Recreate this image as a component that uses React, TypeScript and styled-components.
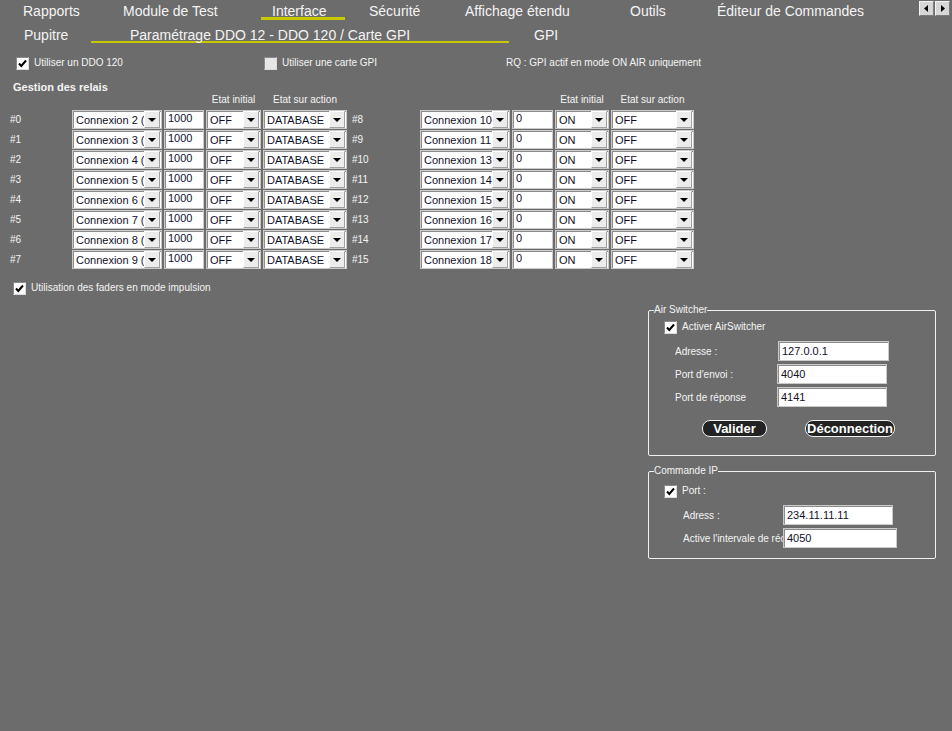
import React from 'react';
import styled, { createGlobalStyle } from 'styled-components';

const GlobalStyle = createGlobalStyle`
  html, body {
    margin: 0;
    padding: 0;
    background: #6c6c6c;
  }
  body {
    font-family: 'Liberation Sans', Arial, sans-serif;
  }
`;

const colors = {
  bg: '#6c6c6c',
  text: '#f4f4f4',
  accent: '#c6c800',
  field: '#ffffff',
  fieldText: '#10102a',
};

type TRelay = { id: number; conn: string; delay: string; init: string; action: string };

const leftRelays: TRelay[] = [2, 3, 4, 5, 6, 7, 8, 9].map((n, i) => ({
  id: i,
  conn: `Connexion ${n} (DDO 12)`,
  delay: '1000',
  init: 'OFF',
  action: 'DATABASE',
}));

const rightRelays: TRelay[] = [10, 11, 13, 14, 15, 16, 17, 18].map((n, i) => ({
  id: i + 8,
  conn: `Connexion ${n} (DDO 120)`,
  delay: '0',
  init: 'ON',
  action: 'OFF',
}));

// slot width / text offset inside the slot
const topTabs = [
  { label: 'Rapports', w: 100, pad: 0 },
  { label: 'Module de Test', w: 138, pad: 0 },
  { label: 'Interface', w: 84, pad: 11, active: true },
  { label: 'Sécurité', w: 120, pad: 24 },
  { label: 'Affichage étendu', w: 165, pad: 0 },
  { label: 'Outils', w: 87, pad: 0 },
  { label: 'Éditeur de Commandes', w: 170, pad: 0 },
];

const Checkbox = ({ checked }: { checked?: boolean }) => (
  <CheckBoxBox $checked={checked}>
    {checked && (
      <svg width="9" height="9" viewBox="0 0 9 9">
        <path d="M1 4.5 L3.3 7 L8 1.5" fill="none" stroke="#000" strokeWidth="2" />
      </svg>
    )}
  </CheckBoxBox>
);

const Select = ({ value }: { value: string }) => (
  <SelectBox>
    <SelectText>{value}</SelectText>
    <DropButton>
      <Triangle />
    </DropButton>
  </SelectBox>
);

const RelayTable = ({ relays, cols }: { relays: TRelay[]; cols: string }) => (
  <TableGrid $cols={cols}>
    <span />
    <span />
    <span />
    <ColHead>Etat initial</ColHead>
    <ColHead>Etat sur action</ColHead>
    {relays.map((r) => (
      <React.Fragment key={r.id}>
        <RowLabel>#{r.id}</RowLabel>
        <Select value={r.conn} />
        <TextInput>{r.delay}</TextInput>
        <Select value={r.init} />
        <Select value={r.action} />
      </React.Fragment>
    ))}
  </TableGrid>
);

const App = () => {
  return (
    <Page>
      <GlobalStyle />
      <TabRow>
        {topTabs.map((t) => (
          <Tab key={t.label} $w={t.w} $pad={t.pad} $active={t.active}>
            {t.label}
          </Tab>
        ))}
        <Arrows>
          <ArrowButton>
            <svg width="5" height="7" viewBox="0 0 5 7">
              <path d="M4 0 L0 3.5 L4 7 Z" fill="#000" />
            </svg>
          </ArrowButton>
          <ArrowButton>
            <svg width="5" height="7" viewBox="0 0 5 7">
              <path d="M1 0 L5 3.5 L1 7 Z" fill="#000" />
            </svg>
          </ArrowButton>
        </Arrows>
      </TabRow>
      <SubTabRow>
        <SubTab $w={67}>Pupitre</SubTab>
        <SubTab $w={418} $pad={39} $active>
          Paramétrage DDO 12 - DDO 120 / Carte GPI
        </SubTab>
        <SubTab $w={80} $pad={25}>
          GPI
        </SubTab>
      </SubTabRow>

      <OptionsRow>
        <CheckLine>
          <Checkbox checked />
          <span>Utiliser un DDO 120</span>
        </CheckLine>
        <CheckLine>
          <Checkbox />
          <span>Utiliser une carte GPI</span>
        </CheckLine>
        <Note>RQ : GPI actif en mode ON AIR uniquement</Note>
      </OptionsRow>

      <SectionTitle>Gestion des relais</SectionTitle>
      <Tables>
        <RelayTable relays={leftRelays} cols="60px 90px 40px 55px 84px" />
        <RelayTable relays={rightRelays} cols="66px 90px 41px 54px 83px" />
      </Tables>

      <FaderLine>
        <Checkbox checked />
        <span>Utilisation des faders en mode impulsion</span>
      </FaderLine>

      <SidePanel>
        <GroupBox>
          <legend>Air Switcher</legend>
          <CheckLine $indent={15}>
            <Checkbox checked />
            <span>Activer AirSwitcher</span>
          </CheckLine>
          <FieldList $top={7}>
            <FieldRow $labelW={103}>
              <FieldLabel>Adresse :</FieldLabel>
              <TextInput $w={111} $h={20}>127.0.0.1</TextInput>
            </FieldRow>
            <FieldRow $labelW={102}>
              <FieldLabel>Port d'envoi :</FieldLabel>
              <TextInput $w={110} $h={20}>4040</TextInput>
            </FieldRow>
            <FieldRow $labelW={102}>
              <FieldLabel>Port de réponse</FieldLabel>
              <TextInput $w={110} $h={20}>4141</TextInput>
            </FieldRow>
          </FieldList>
          <ButtonRow>
            <PillButton $w={65}>Valider</PillButton>
            <PillButton $w={90}>Déconnection</PillButton>
          </ButtonRow>
        </GroupBox>

        <GroupBox $top={7} $bottom={10}>
          <legend>Commande IP</legend>
          <CheckLine $indent={15}>
            <Checkbox checked />
            <span>Port :</span>
          </CheckLine>
          <FieldList $top={7} $indent={34}>
            <FieldRow $labelW={100}>
              <FieldLabel>Adress :</FieldLabel>
              <TextInput $w={110} $h={20}>234.11.11.11</TextInput>
            </FieldRow>
            <FieldRow $labelW={100}>
              <FieldLabel>Active l'intervale de réception</FieldLabel>
              <TextInput $w={114} $h={20}>4050</TextInput>
            </FieldRow>
          </FieldList>
        </GroupBox>
      </SidePanel>
    </Page>
  );
};

export default App;

const Page = styled.div`
  width: 952px;
  min-height: 731px;
  background: ${colors.bg};
  color: ${colors.text};
  font-family: 'Liberation Sans', Arial, sans-serif;
  overflow: hidden;
`;

const TabRow = styled.div`
  display: flex;
  align-items: flex-start;
  padding-left: 23px;
  height: 22px;
`;

const Tab = styled.div<{ $w: number; $pad: number; $active?: boolean }>`
  width: ${(p) => p.$w - p.$pad}px;
  padding-left: ${(p) => p.$pad}px;
  flex: none;
  font-size: 14px;
  line-height: 14px;
  padding-top: 4px;
  height: 13px;
  border-bottom: 3px solid ${(p) => (p.$active ? colors.accent : 'transparent')};
  box-sizing: content-box;
  white-space: nowrap;
`;

const Arrows = styled.div`
  margin-left: auto;
  margin-right: 2px;
  margin-top: 1px;
  display: flex;
  gap: 1px;
`;

const ArrowButton = styled.div`
  width: 13px;
  height: 13px;
  background: #d6d6d6;
  border: 1px solid;
  border-color: #f4f4f4 #7a7a7a #7a7a7a #f4f4f4;
  display: flex;
  align-items: center;
  justify-content: center;
`;

const SubTabRow = styled.div`
  display: flex;
  padding-left: 24px;
  height: 22px;
`;

const SubTab = styled.div<{ $w: number; $pad?: number; $active?: boolean }>`
  width: ${(p) => p.$w - (p.$pad || 0)}px;
  padding-left: ${(p) => p.$pad || 0}px;
  flex: none;
  font-size: 14px;
  line-height: 14px;
  padding-top: 6px;
  height: 13px;
  box-sizing: content-box;
  border-bottom: 2px solid ${(p) => (p.$active ? colors.accent : 'transparent')};
  white-space: nowrap;
`;

const OptionsRow = styled.div`
  display: grid;
  grid-template-columns: 248px 242px auto;
  padding-left: 16px;
  margin-top: 12px;
  height: 14px;
  align-items: center;
`;

const CheckLine = styled.div<{ $indent?: number }>`
  display: flex;
  align-items: center;
  gap: 5px;
  font-size: 10px;
  line-height: 14px;
  padding-left: ${(p) => p.$indent || 0}px;
  white-space: nowrap;
`;

const CheckBoxBox = styled.span<{ $checked?: boolean }>`
  width: 11px;
  height: 11px;
  flex: none;
  background: ${(p) => (p.$checked ? '#ffffff' : '#e6e6e6')};
  border: 1px solid;
  border-color: #8a8a8a #dcdcdc #dcdcdc #8a8a8a;
  display: flex;
  align-items: center;
  justify-content: center;
`;

const Note = styled.span`
  font-size: 10px;
  line-height: 14px;
  white-space: nowrap;
`;

const SectionTitle = styled.div`
  font-size: 11px;
  font-weight: bold;
  line-height: 13px;
  padding-left: 13px;
  margin-top: 11px;
`;

const Tables = styled.div`
  display: flex;
  gap: 5px;
  padding-left: 10px;
`;

const TableGrid = styled.div<{ $cols: string }>`
  display: grid;
  grid-template-columns: ${(p) => p.$cols};
  grid-auto-rows: 19px;
  grid-template-rows: 15px;
  column-gap: 2px;
  row-gap: 1px;
`;

const ColHead = styled.span`
  font-size: 10px;
  line-height: 12px;
  text-align: center;
  white-space: nowrap;
  align-self: start;
`;

const RowLabel = styled.span`
  font-size: 10px;
  line-height: 19px;
`;

const SelectBox = styled.div`
  height: 19px;
  box-sizing: border-box;
  background: ${colors.field};
  border: 1px solid #cacaca;
  box-shadow: inset 1px 1px 0 #8c8c8c;
  display: flex;
  align-items: center;
  overflow: hidden;
`;

const SelectText = styled.span`
  flex: 1;
  min-width: 0;
  padding-left: 3px;
  font-size: 11px;
  color: ${colors.fieldText};
  white-space: nowrap;
  overflow: hidden;
`;

const DropButton = styled.span`
  width: 14px;
  height: 15px;
  flex: none;
  margin-right: 1px;
  background: #ececec;
  border: 1px solid;
  border-color: #ffffff #a0a0a0 #a0a0a0 #ffffff;
  display: flex;
  align-items: center;
  justify-content: center;
`;

const Triangle = styled.span`
  width: 0;
  height: 0;
  border-left: 4px solid transparent;
  border-right: 4px solid transparent;
  border-top: 4px solid #000;
`;

const TextInput = styled.div<{ $w?: number; $h?: number }>`
  ${(p) => (p.$w ? `width: ${p.$w}px;` : '')}
  height: ${(p) => p.$h ?? 19}px;
  box-sizing: border-box;
  background: ${colors.field};
  border: 1px solid #cacaca;
  box-shadow: inset 1px 1px 0 #8c8c8c;
  padding: ${(p) => (p.$h ? 3 : 1)}px 0 0 3px;
  font-size: 11px;
  line-height: 13px;
  color: ${colors.fieldText};
  white-space: nowrap;
  overflow: hidden;
`;

const FaderLine = styled(CheckLine)`
  padding-left: 13px;
  margin-top: 12px;
`;

const SidePanel = styled.div`
  display: flex;
  flex-direction: column;
  align-items: flex-end;
  gap: 9px;
  padding-right: 16px;
  margin-top: 9px;
`;

const GroupBox = styled.fieldset<{ $top?: number; $bottom?: number }>`
  width: 288px;
  box-sizing: border-box;
  margin: 0;
  padding: ${(p) => p.$top ?? 4}px 0 ${(p) => p.$bottom ?? 18}px 0;
  border: 1px solid #f0f0f0;
  border-radius: 2px;

  legend {
    font-size: 10px;
    line-height: 12px;
    margin-left: 5px;
    padding: 0;
    color: ${colors.text};
  }
`;

const FieldList = styled.div<{ $top: number; $indent?: number }>`
  display: flex;
  flex-direction: column;
  gap: 3px;
  margin-top: ${(p) => p.$top}px;
  padding-left: ${(p) => p.$indent ?? 26}px;
`;

const FieldRow = styled.div<{ $labelW: number }>`
  display: grid;
  grid-template-columns: ${(p) => p.$labelW}px auto;
  align-items: center;
`;

const FieldLabel = styled.span`
  font-size: 10px;
  white-space: nowrap;
  overflow: hidden;
`;

const ButtonRow = styled.div`
  display: flex;
  gap: 38px;
  padding-left: 53px;
  margin-top: 13px;
`;

const PillButton = styled.div<{ $w: number }>`
  width: ${(p) => p.$w}px;
  height: 17px;
  box-sizing: border-box;
  background: #222222;
  border: 1px solid #f0f0f0;
  border-radius: 8px;
  color: #ffffff;
  font-size: 13px;
  font-weight: bold;
  line-height: 15px;
  text-align: center;
  white-space: nowrap;
`;
